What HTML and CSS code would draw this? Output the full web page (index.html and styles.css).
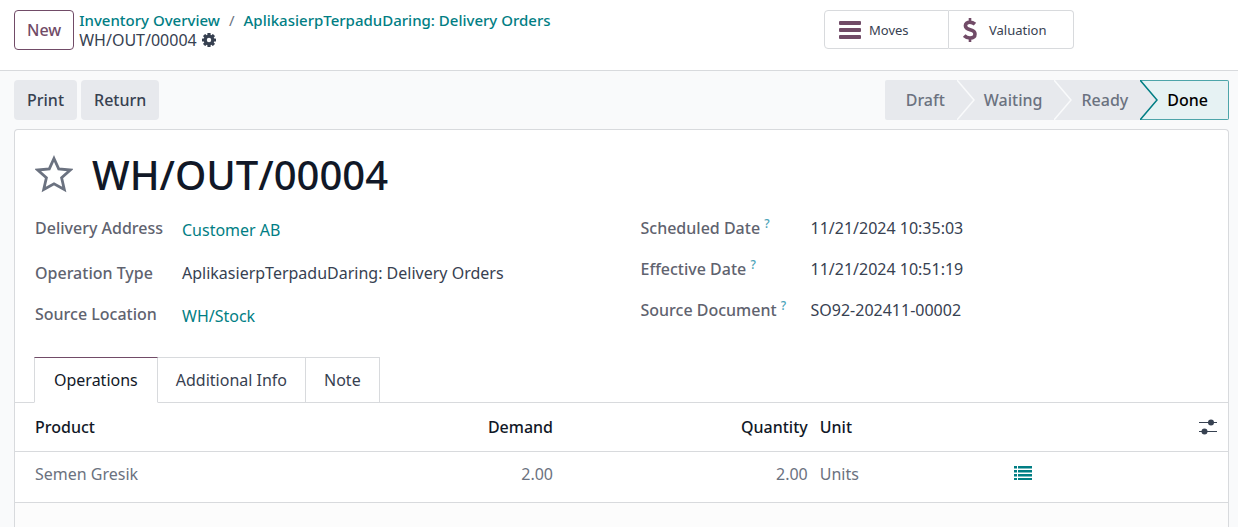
FILE: index.html
```html
<!DOCTYPE html>
<html lang="en">
<head>
<meta charset="utf-8">
<title>WH/OUT/00004</title>
<link rel="stylesheet" href="styles.css">
</head>
<body>
<header class="control-panel">
  <div class="panel-left">
    <button class="btn btn-new" type="button">New</button>
    <nav class="crumbs" aria-label="Breadcrumb">
      <div class="crumb-trail">
        <a href="#">Inventory Overview</a><span class="crumb-sep">/</span><a href="#">AplikasierpTerpaduDaring: Delivery Orders</a>
      </div>
      <div class="crumb-current">
        <span>WH/OUT/00004</span>
        <button class="icon-btn" type="button" aria-label="Actions">
          <svg width="14" height="14" viewBox="0 0 14 14"><g fill="#374151"><rect x="5.4" width="3.2" height="14" rx=".5"/><rect x="5.4" width="3.2" height="14" rx=".5" transform="rotate(45 7 7)"/><rect x="5.4" width="3.2" height="14" rx=".5" transform="rotate(90 7 7)"/><rect x="5.4" width="3.2" height="14" rx=".5" transform="rotate(135 7 7)"/><circle cx="7" cy="7" r="5.4"/></g><circle cx="7" cy="7" r="2.2" fill="#fff"/></svg>
        </button>
      </div>
    </nav>
  </div>
  <div class="stat-buttons">
    <button class="stat" type="button">
      <svg width="22" height="18" viewBox="0 0 22 18" fill="#714b67"><rect width="22" height="4" rx="1"/><rect y="7" width="22" height="4" rx="1"/><rect y="14" width="22" height="4" rx="1"/></svg>
      <span>Moves</span>
    </button>
    <button class="stat stat-value" type="button">
      <svg width="14" height="26" viewBox="0 0 14 26" fill="none" stroke="#714b67" stroke-width="3.6"><path d="M12 7.2C10.400 5.800 8.600 5.200 6.800 5.200C4.200 5.200 2.400 6.600 2.400 8.800C2.400 14.200 12 11.400 12 17C12 19.600 9.900 21 7 21C4.800 21 2.800 20.200 1.200 18.600"/><path stroke-width="2.600" d="M7 1V5M7 21V25"/></svg>
      <span>Valuation</span>
    </button>
  </div>
</header>
<main class="form-view">
  <div class="status-row">
    <div class="actions">
      <button class="btn" type="button">Print</button>
      <button class="btn" type="button">Return</button>
    </div>
    <div class="statusbar">
      <button class="step step-first" type="button">Draft</button>
      <button class="step" type="button"><svg class="chevron" viewBox="0 0 18 40"><path d="M0 0L17 20L0 40"/></svg>Waiting</button>
      <button class="step" type="button"><svg class="chevron" viewBox="0 0 18 40"><path d="M0 0L17 20L0 40"/></svg>Ready</button>
      <button class="step step-current" type="button" aria-current="step"><svg class="chevron" viewBox="0 0 18 40"><path d="M0 0L17 20L0 40"/></svg>Done</button>
    </div>
  </div>
  <section class="sheet">
    <div class="sheet-body">
      <div class="title">
        <button class="icon-btn" type="button" aria-label="Favorite">
          <svg width="38" height="38" viewBox="0 0 38 38" fill="none" stroke="#6b7280" stroke-width="2.800"><path d="M19 3.500L23.700 13.900L35.300 15L26.600 22.800L29.300 34.500L19 28.800L8.700 34.500L11.400 22.800L2.700 15L14.300 13.900Z"/></svg>
        </button>
        <h1>WH/OUT/00004</h1>
      </div>
      <div class="groups">
        <dl class="fields fields-left">
          <dt>Delivery Address</dt><dd class="linked"><a href="#">Customer AB</a></dd>
          <dt>Operation Type</dt><dd>AplikasierpTerpaduDaring: Delivery Orders</dd>
          <dt>Source Location</dt><dd class="linked"><a href="#">WH/Stock</a></dd>
        </dl>
        <dl class="fields fields-right">
          <dt>Scheduled Date <sup>?</sup></dt><dd>11/21/2024 10:35:03</dd>
          <dt>Effective Date <sup>?</sup></dt><dd>11/21/2024 10:51:19</dd>
          <dt>Source Document <sup>?</sup></dt><dd>SO92-202411-00002</dd>
        </dl>
      </div>
    </div>
    <div class="tabs" role="tablist">
      <button class="tab tab-active" type="button" role="tab" aria-selected="true">Operations</button>
      <button class="tab" type="button" role="tab" aria-selected="false">Additional Info</button>
      <button class="tab" type="button" role="tab" aria-selected="false">Note</button>
    </div>
    <table class="lines">
      <colgroup><col class="col-product"><col class="col-demand"><col class="col-qty"><col class="col-unit"><col class="col-detail"><col></colgroup>
      <thead>
        <tr><th>Product</th><th class="num">Demand</th><th class="num">Quantity</th><th>Unit</th><th></th>
        <th class="options"><button class="icon-btn" type="button" aria-label="Optional columns"><svg width="18" height="16" viewBox="0 0 18 16" fill="#374151"><rect y="3" width="18" height="1"/><rect y="12" width="18" height="1"/><circle cx="12" cy="3.500" r="3"/><circle cx="5.500" cy="12.500" r="3"/></svg></button></th></tr>
      </thead>
      <tbody>
        <tr><td>Semen Gresik</td><td class="num">2.00</td><td class="num">2.00</td><td>Units</td>
        <td><button class="icon-btn" type="button" aria-label="Details"><svg width="18" height="14" viewBox="0 0 18 14" fill="#017e84"><path d="M0 0h3v2.500H0zM4 0h14v2.500H4zM0 4h3v2.500H0zM4 4h14v2.500H4zM0 8h3v2.500H0zM4 8h14v2.500H4zM0 12h3v2H0zM4 12h14v2H4z"/></svg></button></td><td></td></tr>
      </tbody>
    </table>
    <div class="sheet-rest"></div>
  </section>
</main>
</body>
</html>
```
FILE: styles.css
```css
* { box-sizing: border-box; }

body {
  margin: 0;
  min-height: 100vh;
  display: flex;
  flex-direction: column;
  background: #f9fafb;
  color: #374151;
  font: 16px/24px "Noto Sans", "Open Sans", sans-serif;
}

a { color: #017e84; text-decoration: none; }
button { font: inherit; color: inherit; cursor: pointer; }
svg { display: block; flex: none; }

.icon-btn { padding: 0; border: 0; background: none; }

.control-panel {
  display: grid;
  grid-template-columns: 810fr 414fr;
  padding: 10px 0 20px 14px;
  background: #fff;
  border-bottom: 1px solid #d8dadd;
}

.panel-left { display: flex; gap: 5px; }

.btn {
  height: 40px;
  padding: 0 13px;
  border: 0;
  border-radius: 4px;
  background: #e7e9ed;
  font-weight: 500;
}

.btn-new { padding: 0 12px; border: 1px solid #714b67; background: #fff; color: #714b67; }

.crumbs { line-height: 20px; white-space: nowrap; }
.crumb-trail { font-size: 15px; font-weight: 500; }
.crumb-sep { padding: 0 9px; color: #6b7280; font-weight: 400; }
.crumb-current { display: flex; align-items: center; gap: 5px; }

.stat-buttons { display: flex; align-items: flex-start; }

.stat {
  display: flex;
  align-items: center;
  gap: 8px;
  width: 125px;
  height: 39px;
  padding: 0 14px;
  border: 1px solid #d8dadd;
  border-radius: 4px 0 0 4px;
  background: #fff;
  font-size: 13px;
}

.stat-value { gap: 12px; border-left: 0; border-radius: 0 4px 4px 0; }

.form-view {
  flex: 1;
  display: flex;
  flex-direction: column;
  gap: 9px;
  padding: 9px 9px 0 14px;
}

.status-row { display: flex; justify-content: space-between; }
.actions { display: flex; gap: 4px; }
.statusbar { display: flex; border-radius: 2px; background: #e7e9ed; }

.step {
  position: relative;
  height: 40px;
  padding: 0 12px 0 27px;
  border: 0;
  background: none;
  color: #6b7280;
  font-weight: 500;
}

.step-first { padding-left: 21px; }
.step-current { padding-right: 20px; border: 1px solid #4da5a9; border-left: 0; border-radius: 0 2px 2px 0; background: #e6f2f3; color: #000; }

.chevron { position: absolute; top: 0; left: 0; width: 18px; height: 40px; fill: #e7e9ed; stroke: #f9fafb; stroke-width: 1.5; }
.step-current .chevron { top: -1px; stroke: #017e84; }

.sheet {
  flex: 1;
  display: flex;
  flex-direction: column;
  border: 1px solid #d8dadd;
  border-bottom: 0;
  border-radius: 4px 4px 0 0;
  background: #fff;
}

.sheet-body { padding: 19px 20px 27px; }
.title { display: flex; align-items: center; gap: 19px; }
.title .icon-btn { margin-bottom: 2px; }
h1 { margin: 0; color: #111827; font-size: 40px; font-weight: 500; line-height: 52px; }

.groups { display: grid; grid-template-columns: 1fr 1fr; gap: 38px; margin-top: 15px; }
.fields { display: grid; align-content: start; row-gap: 17px; margin: 0; }
.fields-left { grid-template-columns: 147px 1fr; }
.fields-right { grid-template-columns: 170px 1fr; }
dt { color: #5f636f; font-weight: 500; }
dd { margin: 0; }
.linked { padding: 2px 0; }
sup { color: #4aa3b8; font-size: 12px; line-height: 0; }

.tabs { display: flex; padding-left: 19px; margin-bottom: -1px; }

.tab {
  height: 46px;
  margin-left: -1px;
  padding: 0 18px;
  border: 1px solid #d8dadd;
  background: #fff;
}

.tab-active { margin-left: 0; padding: 0 19px; border-top-color: #714b67; border-bottom-color: #fff; color: #111827; z-index: 1; }

.lines { width: 100%; table-layout: fixed; border-collapse: collapse; border-top: 1px solid #d8dadd; }
.col-product { width: 27.85%; }
.col-demand { width: 17%; }
.col-qty { width: 21%; }
.col-unit { width: 16%; }
.col-detail { width: 9%; }
th, td { padding: 0 6px; border-bottom: 1px solid #d8dadd; text-align: left; }
th { height: 49px; color: #111827; font-weight: 500; }
td { height: 51px; padding-bottom: 6px; color: #6b7280; }
th:first-child, td:first-child { padding-left: 20px; }
.num { text-align: right; }
.options { padding-right: 11px; }
.options .icon-btn { margin-left: auto; display: block; }
.sheet-rest { flex: 1; background: #fcfcfc; }
```
